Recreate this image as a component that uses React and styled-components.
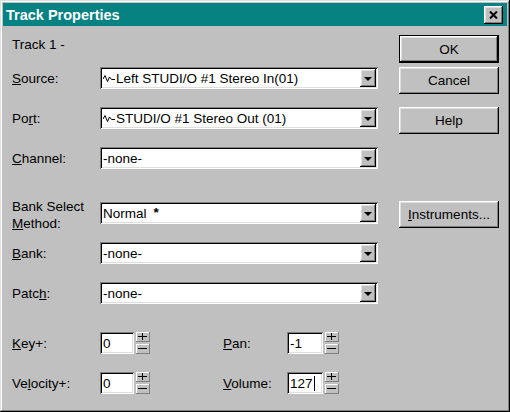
import React from "react";
import styled, { createGlobalStyle } from "styled-components";

const GlobalStyle = createGlobalStyle`
  html, body {
    margin: 0;
    padding: 0;
    background: #c0c0c0;
  }
  body {
    font-family: "Liberation Sans", Arial, sans-serif;
    font-size: 13.5px;
    color: #000;
  }
`;

function Wave() {
  return (
    <WaveIcon width="12" height="9" viewBox="0 0 12 9">
      <polyline
        points="0,5 2,1.5 4.5,7.5 6.5,3 8.5,5.5 12,5.5"
        fill="none"
        stroke="#000"
        strokeWidth="1"
      />
    </WaveIcon>
  );
}

function Combo({ icon, children }) {
  return (
    <ComboBox>
      <ComboText>
        {icon && <Wave />}
        {children}
      </ComboText>
      <ArrowButton>
        <Arrow />
      </ArrowButton>
    </ComboBox>
  );
}

function Spin({ value, width, caret }) {
  return (
    <>
      <Edit $width={width}>
        {value}
        {caret && <Caret />}
      </Edit>
      <Spinner>
        <SpinButton>
          <Plus />
        </SpinButton>
        <SpinButton>
          <Minus />
        </SpinButton>
      </Spinner>
    </>
  );
}

function App() {
  return (
    <>
      <GlobalStyle />
      <Window>
        <TitleBar>
          <Title>Track Properties</Title>
          <CloseButton>
            <svg width="9" height="8" viewBox="0 0 9 8">
              <path d="M1 0.5 L8 7.5 M8 0.5 L1 7.5" stroke="#000" strokeWidth="2" />
            </svg>
          </CloseButton>
        </TitleBar>
        <Body>
          <LeftPane>
            <TrackName>Track 1 -</TrackName>

            <Row $top={14}>
              <Label>
                <u>S</u>ource:
              </Label>
              <Combo icon>Left STUDI/O #1 Stereo In(01)</Combo>
            </Row>
            <Row $top={18}>
              <Label>
                Po<u>r</u>t:
              </Label>
              <Combo icon>STUDI/O #1 Stereo Out (01)</Combo>
            </Row>
            <Row $top={18}>
              <Label>
                <u>C</u>hannel:
              </Label>
              <Combo>-none-</Combo>
            </Row>

            <Row $top={33} $top2>
              <TwoLineLabel>
                Bank Select
                <br />
                <u>M</u>ethod:
              </TwoLineLabel>
              <Combo>
                Normal<Star>*</Star>
              </Combo>
            </Row>
            <Row $top={18}>
              <Label>
                <u>B</u>ank:
              </Label>
              <Combo>-none-</Combo>
            </Row>
            <Row $top={18}>
              <Label>
                Patc<u>h</u>:
              </Label>
              <Combo>-none-</Combo>
            </Row>

            <Row $top={28}>
              <Label>
                <u>K</u>ey+:
              </Label>
              <Spin value="0" width={34} />
              <SmallLabel>
                <u>P</u>an:
              </SmallLabel>
              <Spin value="-1" width={36} />
            </Row>
            <Row $top={18}>
              <Label>
                Ve<u>l</u>ocity+:
              </Label>
              <Spin value="0" width={34} />
              <SmallLabel>
                <u>V</u>olume:
              </SmallLabel>
              <Spin value="127" width={36} caret />
            </Row>
          </LeftPane>

          <RightPane>
            <DefaultFrame>
              <Button $inner>OK</Button>
            </DefaultFrame>
            <Button $top={4}>Cancel</Button>
            <Button $top={13}>Help</Button>
            <Button $top={67}>
              <u>I</u>nstruments...
            </Button>
          </RightPane>
        </Body>
      </Window>
    </>
  );
}

export default App;

const raised = `
  box-shadow: inset -1px -1px #000, inset 1px 1px #fff,
    inset -2px -2px #808080, inset 2px 2px #dfdfdf;
`;

const sunken = `
  box-shadow: inset 1px 1px #808080, inset -1px -1px #fff,
    inset 2px 2px #000, inset -2px -2px #dfdfdf;
`;

const Window = styled.div`
  width: 510px;
  height: 412px;
  box-sizing: border-box;
  padding: 3px;
  background: #c0c0c0;
  box-shadow: inset -1px -1px #000, inset 1px 1px #dfdfdf,
    inset -2px -2px #808080, inset 2px 2px #fff;
  display: flex;
  flex-direction: column;
`;

const TitleBar = styled.div`
  height: 23px;
  flex: none;
  background: #068282;
  display: flex;
  align-items: center;
  justify-content: space-between;
  padding: 0 4px 0 3px;
`;

const Title = styled.div`
  color: #fff;
  font-weight: bold;
  font-size: 14.5px;
`;

const CloseButton = styled.div`
  width: 19px;
  height: 18px;
  background: #c0c0c0;
  ${raised}
  display: flex;
  align-items: center;
  justify-content: center;
`;

const Body = styled.div`
  flex: 1;
  display: flex;
  padding: 9px 8px 0 9px;
`;

const LeftPane = styled.div`
  width: 366px;
  display: flex;
  flex-direction: column;
`;

const TrackName = styled.div`
  margin-top: 2px;
  line-height: 16px;
`;

const Row = styled.div`
  display: flex;
  align-items: ${(p) => (p.$top2 ? "flex-start" : "center")};
  height: 22px;
  margin-top: ${(p) => p.$top}px;
`;

const Label = styled.div`
  width: 88px;
  flex: none;
`;

const TwoLineLabel = styled.div`
  width: 88px;
  flex: none;
  line-height: 17px;
  margin-top: -4px;
`;

const SmallLabel = styled.div`
  width: 64px;
  flex: none;
  margin-left: 73px;
`;

const ComboBox = styled.div`
  width: 278px;
  height: 22px;
  box-sizing: border-box;
  background: #fff;
  ${sunken}
  display: flex;
  align-items: center;
  padding: 2px;
`;

const ComboText = styled.div`
  flex: 1;
  padding-left: 1px;
  display: flex;
  align-items: center;
  white-space: pre;
`;

const WaveIcon = styled.svg`
  margin-right: 1px;
  flex: none;
`;

const Star = styled.span`
  font-weight: bold;
  margin-left: 7px;
  position: relative;
  top: -1px;
`;

const ArrowButton = styled.div`
  width: 16px;
  height: 18px;
  background: #c0c0c0;
  ${raised}
  display: flex;
  align-items: center;
  justify-content: center;
`;

const Arrow = styled.div`
  width: 0;
  height: 0;
  border-left: 4px solid transparent;
  border-right: 4px solid transparent;
  border-top: 4px solid #000;
  margin-top: 1px;
`;

const Edit = styled.div`
  width: ${(p) => p.$width}px;
  height: 22px;
  box-sizing: border-box;
  background: #fff;
  ${sunken}
  padding: 0 3px;
  display: flex;
  align-items: center;
  flex: none;
`;

const Caret = styled.span`
  width: 1px;
  height: 15px;
  background: #000;
  margin-left: 1px;
`;

const Spinner = styled.div`
  margin-left: 2px;
  display: flex;
  flex-direction: column;
  gap: 2px;
  flex: none;
`;

const SpinButton = styled.div`
  width: 14px;
  height: 10px;
  background: #c0c0c0;
  box-shadow: inset -1px -1px #808080, inset 1px 1px #fff;
  position: relative;
`;

const Minus = styled.div`
  position: absolute;
  left: 2px;
  right: 3px;
  top: 4px;
  height: 1px;
  background: #000;
`;

const Plus = styled(Minus)`
  &::after {
    content: "";
    position: absolute;
    left: 4px;
    top: -3px;
    width: 1px;
    height: 7px;
    background: #000;
  }
`;

const RightPane = styled.div`
  margin-left: auto;
  width: 100px;
  display: flex;
  flex-direction: column;
`;

const DefaultFrame = styled.div`
  border: 1px solid #000;
  display: flex;
`;

const Button = styled.div`
  width: ${(p) => (p.$inner ? 98 : 100)}px;
  height: ${(p) => (p.$inner ? 26 : 27)}px;
  margin-top: ${(p) => p.$top || 0}px;
  background: #c0c0c0;
  ${raised}
  display: flex;
  align-items: center;
  justify-content: center;
`;
